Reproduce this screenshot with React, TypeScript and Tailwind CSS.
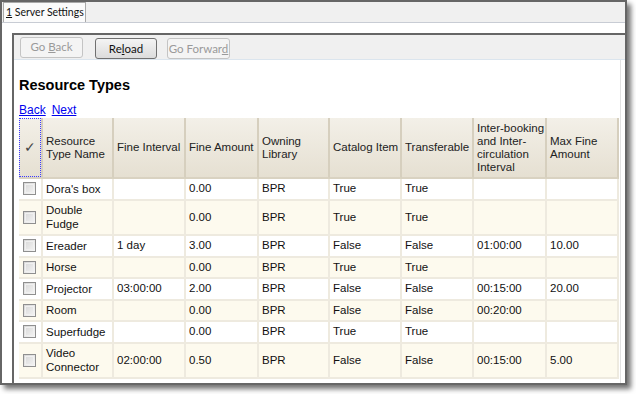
import React from "react";

interface ResourceType {
  name: React.ReactNode;
  fineInterval: string;
  fineAmount: string;
  library: string;
  catalogItem: string;
  transferable: string;
  interval: string;
  maxFine: string;
  tall?: boolean;
}

const rows: Array<ResourceType> = [
  { name: "Dora's box", fineInterval: "", fineAmount: "0.00", library: "BPR", catalogItem: "True", transferable: "True", interval: "", maxFine: "" },
  { name: <>Double<br />Fudge</>, fineInterval: "", fineAmount: "0.00", library: "BPR", catalogItem: "True", transferable: "True", interval: "", maxFine: "", tall: true },
  { name: "Ereader", fineInterval: "1 day", fineAmount: "3.00", library: "BPR", catalogItem: "False", transferable: "False", interval: "01:00:00", maxFine: "10.00" },
  { name: "Horse", fineInterval: "", fineAmount: "0.00", library: "BPR", catalogItem: "True", transferable: "True", interval: "", maxFine: "" },
  { name: "Projector", fineInterval: "03:00:00", fineAmount: "2.00", library: "BPR", catalogItem: "False", transferable: "False", interval: "00:15:00", maxFine: "20.00" },
  { name: "Room", fineInterval: "", fineAmount: "0.00", library: "BPR", catalogItem: "False", transferable: "False", interval: "00:20:00", maxFine: "" },
  { name: "Superfudge", fineInterval: "", fineAmount: "0.00", library: "BPR", catalogItem: "True", transferable: "True", interval: "", maxFine: "" },
  { name: <>Video<br />Connector</>, fineInterval: "02:00:00", fineAmount: "0.50", library: "BPR", catalogItem: "False", transferable: "False", interval: "00:15:00", maxFine: "5.00", tall: true },
];

const headers: Array<React.ReactNode> = [
  <>Resource<br />Type Name</>,
  "Fine Interval",
  "Fine Amount",
  <>Owning<br />Library</>,
  "Catalog Item",
  "Transferable",
  <>Inter-booking<br />and Inter-<br />circulation<br />Interval</>,
  <>Max Fine<br />Amount</>,
];

function ToolButton({ children, enabled }: { children: React.ReactNode; enabled?: boolean }) {
  return (
    <button
      className={
        enabled
          ? "h-[21px] w-[62px] rounded-[3px] border border-[#707070] bg-gradient-to-b from-[#f4f4f4] to-[#dcdcdc] text-[11.5px] whitespace-nowrap text-[#111]"
          : "h-[21px] w-[63px] rounded-[3px] border border-[#c4c4c4] bg-[#f4f4f4] text-[11.5px] whitespace-nowrap text-[#9a9a9a]"
      }
    >
      {children}
    </button>
  );
}

function Checkbox() {
  return (
    <div className="h-[13px] w-[13px] border border-[#8f8f8f] bg-gradient-to-br from-[#d6d6d6] to-[#f8f8f8] p-px">
      <div className="h-full w-full border border-[#f0f0f0] bg-gradient-to-br from-[#dcdcdc] to-[#efefef]" />
    </div>
  );
}

export default function App() {
  const cell = "border-r-2 border-b-2 border-[#eeeadf] pl-[3px] pr-[2px] align-middle whitespace-nowrap";

  return (
    <div className="h-[394px] w-[636px] bg-white font-['Liberation_Sans',Arial,sans-serif]">
      <div className="flex h-[385px] w-[627px] flex-col overflow-hidden border-2 border-[#666] bg-white shadow-[4px_4px_5px_rgba(0,0,0,0.55)]">
        {/* tab strip */}
        <div className="flex h-[21px] shrink-0 items-end border-b border-[#c8ccd4] bg-[#f0f0f0] pl-px">
          <div className="flex h-[20px] w-[83px] items-center overflow-hidden border-t border-r border-l border-[#a9a9a9] bg-[#fbfbfb] pl-[2px] font-['Lato',sans-serif] text-[10.5px] whitespace-nowrap text-[#111]">
            <span className="underline">1</span>&nbsp;Server Settings
          </div>
        </div>
        <div className="h-[10px] shrink-0 bg-white" />

        <div className="ml-[10px] flex flex-1 flex-col border-t-2 border-l-2 border-[#666]">
          {/* toolbar */}
          <div className="flex h-[25px] shrink-0 items-center border-b border-[#dbe5ee] bg-[#f0f0f0] pl-[6px] font-['Lato',sans-serif]">
            <ToolButton>
              Go <span className="underline">B</span>ack
            </ToolButton>
            <div className="ml-[12px]">
              <ToolButton enabled>
                Re<span className="underline">l</span>oad
              </ToolButton>
            </div>
            <div className="ml-[10px]">
              <ToolButton>
                Go Forwar<span className="underline">d</span>
              </ToolButton>
            </div>
          </div>

          <div className="flex flex-1 pl-[5px]">
            <div className="flex flex-col">
              <h2 className="mt-[16px] text-[14.5px] leading-[18px] font-bold text-black">Resource Types</h2>
              <div className="mt-[9px] flex gap-[6px] text-[12px] leading-[15px] text-[#0000ee]">
                <a className="underline">Back</a>
                <a className="underline">Next</a>
              </div>

              <table className="w-[600px] table-fixed border-separate border-spacing-0 text-[11.5px] text-[#111]">
                <colgroup>
                  <col className="w-[24px]" />
                  <col className="w-[71px]" />
                  <col className="w-[72px]" />
                  <col className="w-[73px]" />
                  <col className="w-[71px]" />
                  <col className="w-[72px]" />
                  <col className="w-[72px]" />
                  <col className="w-[73px]" />
                  <col className="w-[72px]" />
                </colgroup>
                <thead>
                  <tr className="h-[61px] bg-gradient-to-b from-[#f3f0e8] to-[#e5dfd1]">
                    <th className="relative border-r-2 border-b-2 border-r-[#d6cfbe] border-b-[#d9d2c1] text-center align-middle text-[14px] font-normal text-[#444]">
                      <div className="absolute inset-0 border border-dotted border-[#3a3aff]" />
                      ✓
                    </th>
                    {headers.map((h, i) => (
                      <th
                        key={i}
                        className="border-r-2 border-b-2 border-r-[#d6cfbe] border-b-[#d9d2c1] pl-[3px] text-left align-middle leading-[13px] font-normal whitespace-nowrap text-[#222]"
                      >
                        {h}
                      </th>
                    ))}
                  </tr>
                </thead>
                <tbody>
                  {rows.map((r, i) => (
                    <tr
                      key={i}
                      className={(i % 2 === 0 ? "bg-white " : "bg-[#fdfaee] ") + (r.tall ? "h-[35.5px]" : "h-[21.5px]")}
                    >
                      <td className="border-r-2 border-b-2 border-[#eeeadf] pl-[4px] align-middle">
                        <Checkbox />
                      </td>
                      <td className={cell + " leading-[14px]"}>{r.name}</td>
                      <td className={cell}>{r.fineInterval}</td>
                      <td className={cell}>{r.fineAmount}</td>
                      <td className={cell}>{r.library}</td>
                      <td className={cell}>{r.catalogItem}</td>
                      <td className={cell}>{r.transferable}</td>
                      <td className={cell}>{r.interval}</td>
                      <td className={cell}>{r.maxFine}</td>
                    </tr>
                  ))}
                </tbody>
              </table>
            </div>
            <div className="ml-px w-px self-stretch bg-[#e2e2e2]" />
          </div>
        </div>
      </div>
    </div>
  );
}
